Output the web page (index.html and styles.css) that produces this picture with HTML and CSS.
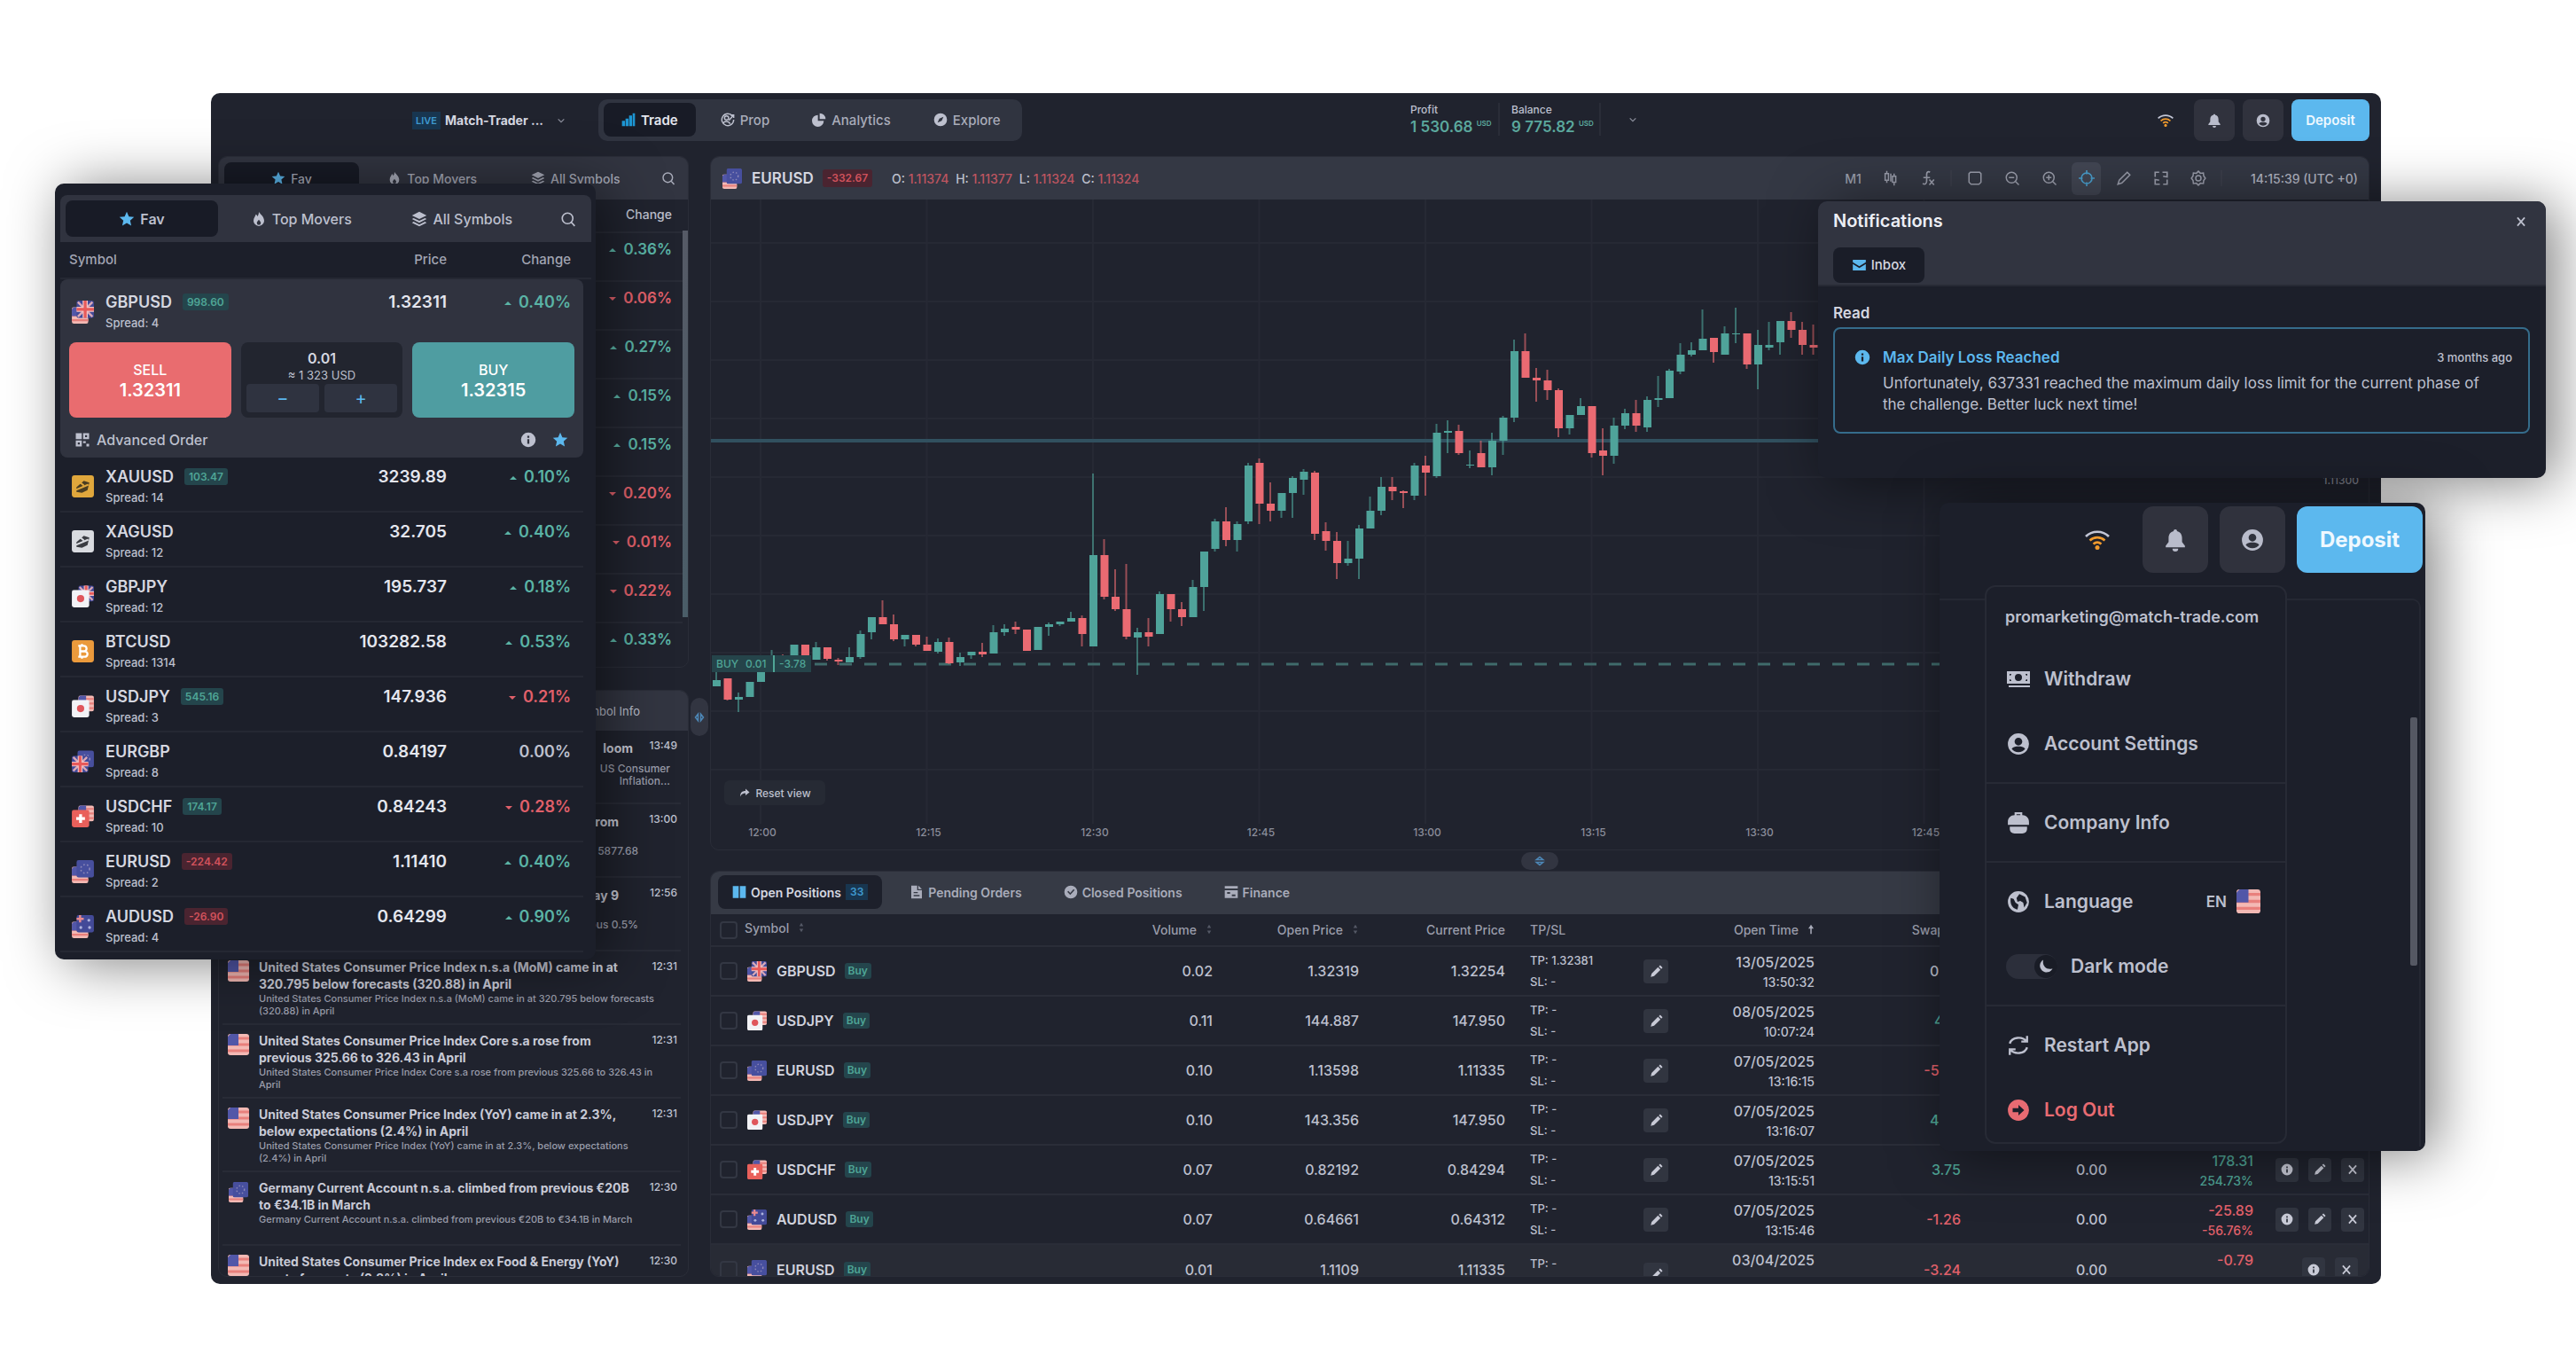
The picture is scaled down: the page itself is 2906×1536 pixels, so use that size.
FILE: index.html
```html
<!DOCTYPE html>
<html lang="en">
<head>
  <meta charset="UTF-8" />
  <title>Match-Trader</title>
  <meta name="viewport" content="width=device-width, initial-scale=1" />
  <link rel="stylesheet" href="styles.css">
</head>
<body>

<!-- icon sprite -->
<svg class="sprite" aria-hidden="true">
  <symbol id="i-star" viewBox="0 0 24 24"><path fill="currentColor" d="M12 1l3.2 7.2 7.8.8-5.9 5.2 1.700 7.800L12 18l-6.800 4 1.700-7.800L1 9l7.800-.8z"/></symbol>
  <symbol id="i-flame" viewBox="0 0 24 24"><path fill="currentColor" fill-rule="evenodd" d="M12 1c1 3 8 7 8 13.500a8 8 0 0 1-16 0C4 10 7 8 7.500 5c1.500.5 2 2 2.500 3 1.500-2 2-4.500 2-7zm0 12c-1.500 2-3 3-3 5a3 3 0 0 0 6 0c0-2-1.500-3-3-5z"/></symbol>
  <symbol id="i-layers" viewBox="0 0 24 24"><path fill="currentColor" d="M12 1l11 5.500-11 5.500L1 6.500zM3.500 10.500L12 14.700l8.500-4.200L23 12l-11 5.500L1 12zM3.500 16L12 20.200 20.500 16 23 17.500 12 23 1 17.500z"/></symbol>
  <symbol id="i-search" viewBox="0 0 24 24"><path fill="none" stroke="currentColor" stroke-width="2.200" d="M11 3a8 8 0 1 0 0 16 8 8 0 0 0 0-16zM16.800 17l5 5.500"/></symbol>
  <symbol id="i-bars" viewBox="0 0 24 24"><path fill="currentColor" d="M1 14h5v9H1zM7 10h5v13H7zM13 5h5v18h-5zM19 1h4v22h-4z"/></symbol>
  <symbol id="i-prop" viewBox="0 0 24 24"><g fill="none" stroke="currentColor" stroke-width="2.200"><path d="M20 6a10 10 0 1 0 2 6M4 19c1-5 9-6 12 0"/><circle cx="10" cy="9" r="3.500"/><path d="M14 13l8-9M17 4h5v5"/></g></symbol>
  <symbol id="i-pie" viewBox="0 0 24 24"><path fill="currentColor" d="M10 4v10h10a10 10 0 1 1-10-10zM13 1a10 10 0 0 1 10 10H13z"/></symbol>
  <symbol id="i-compass" viewBox="0 0 24 24"><path fill="currentColor" fill-rule="evenodd" d="M12 1a11 11 0 1 0 0 22 11 11 0 0 0 0-22zm5 6l-3 7-7 3 3-7z"/></symbol>
  <symbol id="i-chev" viewBox="0 0 24 24"><path fill="none" stroke="currentColor" stroke-width="3" d="M4 8l8 8 8-8"/></symbol>
  <symbol id="i-wifi" viewBox="0 0 28 24"><g fill="none" stroke-width="2.600"><path stroke="#c3c6d6" d="M1 8c7-7 19-7 26 0"/><path stroke="#f09a2d" d="M5.500 12.500c5-4.500 12-4.500 17 0M9.500 16.500c3-2.500 6-2.500 9 0"/></g><circle cx="14" cy="20.500" r="2.500" fill="#f09a2d"/></symbol>
  <symbol id="i-bell" viewBox="0 0 24 24"><path fill="currentColor" d="M12 1c-1.200 0-1.800.8-1.800 1.800C7 3.600 5 6 5 10v4l-3 4v1.500h20V18l-3-4v-4c0-4-2-6.400-5.200-7.200C13.800 1.800 13.200 1 12 1zM9 21h6a3 3 0 0 1-6 0z"/></symbol>
  <symbol id="i-user" viewBox="0 0 24 24"><path fill="currentColor" fill-rule="evenodd" d="M12 1a11 11 0 1 0 0 22 11 11 0 0 0 0-22zm0 4.500a4 4 0 1 1 0 8 4 4 0 0 1 0-8zm0 15c-3 0-5.500-1.500-7-3.500 1.500-2 4.500-2.500 7-2.500s5.500.5 7 2.500c-1.500 2-4 3.500-7 3.500z"/></symbol>
  <symbol id="i-candles" viewBox="0 0 24 24"><path fill="none" stroke="currentColor" stroke-width="2" d="M6 1v4M6 15v4M3.500 5h5v10h-5zM12 5v12M17 5v4M17 18v5M14.500 9h5v9h-5z"/></symbol>
  <symbol id="i-fx" viewBox="0 0 24 24"><path fill="none" stroke="currentColor" stroke-width="2.200" d="M15 3c-3-2-5 0-5 3v10c0 4-2 6-6 4M5 11h10M14 14l7 8M21 14l-7 8"/></symbol>
  <symbol id="i-frame" viewBox="0 0 24 24"><path fill="none" stroke="currentColor" stroke-width="2" d="M5 3h14l2 2v13l-3 3H6l-3-3V5z"/></symbol>
  <symbol id="i-zout" viewBox="0 0 24 24"><path fill="none" stroke="currentColor" stroke-width="2" d="M11 3a8 8 0 1 0 0 16 8 8 0 0 0 0-16zM17 17l5 5M7 11h8"/></symbol>
  <symbol id="i-zin" viewBox="0 0 24 24"><path fill="none" stroke="currentColor" stroke-width="2" d="M11 3a8 8 0 1 0 0 16 8 8 0 0 0 0-16zM17 17l5 5M7 11h8M11 7v8"/></symbol>
  <symbol id="i-cross" viewBox="0 0 24 24"><path fill="none" stroke="currentColor" stroke-width="2.200" d="M12 4a8 8 0 1 0 0 16 8 8 0 0 0 0-16zM12 0v6M12 18v6M0 12h6M18 12h6"/></symbol>
  <symbol id="i-pencil" viewBox="0 0 24 24"><path fill="currentColor" d="M2 22l1.500-6L15 4.500 19.500 9 8 20.500zM16.500 3L19 .8 23.200 5 21 7.500z"/></symbol>
  <symbol id="i-line" viewBox="0 0 24 24"><path fill="none" stroke="currentColor" stroke-width="2" d="M3 21l2-6L17 3l4 4L9 19z"/></symbol>
  <symbol id="i-expand" viewBox="0 0 24 24"><path fill="none" stroke="currentColor" stroke-width="2.200" d="M3 10V3h6M21 14v7h-6M14 3h7v7l-6-1M10 21H3v-7l6 1"/></symbol>
  <symbol id="i-gear" viewBox="0 0 24 24"><g fill="none" stroke="currentColor" stroke-width="2"><path d="M12 1.500l3 3 4.500-.5.5 4.500 2.500 3.500-2.500 3.500-.5 4.500-4.500-.5-3 3-3-3-4.500.5-.5-4.500L1.500 12 4 8.500 4.500 4l4.500.5z"/><circle cx="12" cy="12" r="4"/></g></symbol>
  <symbol id="i-info" viewBox="0 0 24 24"><path fill="currentColor" fill-rule="evenodd" d="M12 1a11 11 0 1 0 0 22 11 11 0 0 0 0-22zm-1.500 5h3v3h-3zm0 5h3v7h-3z"/></symbol>
  <symbol id="i-close" viewBox="0 0 24 24"><path fill="none" stroke="currentColor" stroke-width="3" d="M5 4l14 16M19 4L5 20"/></symbol>
  <symbol id="i-inbox" viewBox="0 0 24 24"><path fill="currentColor" d="M1 3h22v4l-11 7L1 7zM1 10l11 7 11-7v11H1z"/></symbol>
  <symbol id="i-grid" viewBox="0 0 24 24"><path fill="currentColor" fill-rule="evenodd" d="M2 2h9v9H2zM13 2h9v9h-9zm3 3v3h3V5zM2 13h9v9H2zm3 3v3h3v-3zM13 14h4v3h-4zM18 18h4v4h-4z"/></symbol>
  <symbol id="i-book" viewBox="0 0 24 24"><path fill="currentColor" d="M1 2h10v20H1zM13 2h10v20H13z"/></symbol>
  <symbol id="i-file" viewBox="0 0 24 24"><path fill="currentColor" fill-rule="evenodd" d="M3 1h10v8h8v14H3zm12 0l6 6h-6zM7 12v2h7v-2zm0 5v2h10v-2z"/></symbol>
  <symbol id="i-closed" viewBox="0 0 24 24"><path fill="currentColor" fill-rule="evenodd" d="M12 1a11 11 0 1 0 0 22 11 11 0 0 0 0-22zM6 11.500L8 10l3 3.500L16.500 7l2 1.800L11 17z"/></symbol>
  <symbol id="i-finance" viewBox="0 0 24 24"><path fill="currentColor" fill-rule="evenodd" d="M1 2h22v4H1zM1 9h22v13H1zm4 3v3h5v-3zm8 4v3h6v-3z"/></symbol>
  <symbol id="i-reset" viewBox="0 0 24 24"><path fill="currentColor" d="M2 21c0-9 4-13 12-13V3l9 8-9 7v-5c-6 0-9 2-12 8z"/></symbol>
  <symbol id="i-cash" viewBox="0 0 28 24"><path fill="currentColor" fill-rule="evenodd" d="M1 3h26v14H1zm3 3v2a2 2 0 0 0 2-2zm20 0h-2a2 2 0 0 0 2 2zM4 14h2a2 2 0 0 0-2-2zm20 0v-2a2 2 0 0 0-2 2zM14 6a4 4 0 1 0 0 8 4 4 0 0 0 0-8zM3 19h24v2H3z"/></symbol>
  <symbol id="i-case" viewBox="0 0 24 24"><path fill="currentColor" fill-rule="evenodd" d="M8 4V1h8v3c4 0 7 3 7 7v3H1v-3c0-4 3-7 7-7zm2 0h4V3h-4zM3 16h18v2c0 3-2 5-5 5H8c-3 0-5-2-5-5z"/></symbol>
  <symbol id="i-globe" viewBox="0 0 24 24"><path fill="currentColor" fill-rule="evenodd" d="M12 1a11 11 0 1 0 0 22 11 11 0 0 0 0-22zM4 8l3 1 2 4 3 2-1 5c-5-1-8-5-7-12zm9-4l6 3 2 6-3 5-1-5-3-2-3 1-1-4z"/></symbol>
  <symbol id="i-moon" viewBox="0 0 24 24"><path fill="currentColor" d="M8 2a10 10 0 1 0 14 13C13 18 6 11 8 2z"/></symbol>
  <symbol id="i-refresh" viewBox="0 0 24 24"><path fill="none" stroke="currentColor" stroke-width="2.200" d="M3 10c2-7 13-8 18-2M21 2v6h-6M21 14c-2 7-13 8-18 2M3 22v-6h6"/></symbol>
  <symbol id="i-logout" viewBox="0 0 24 24"><path fill="currentColor" fill-rule="evenodd" d="M12 1a11 11 0 1 0 0 22 11 11 0 0 0 0-22zm0 5.500l6 5.500-6 5.500V14H6v-4h6z"/></symbol>
  <symbol id="i-sort" viewBox="0 0 8 16"><path fill="currentColor" d="M4 1l3 5H1zM4 15l-3-5h6z"/></symbol>
  <symbol id="i-sort-up" viewBox="0 0 8 16"><path fill="currentColor" d="M4 1l4 6H5v8H3V7H0z"/></symbol>
  <symbol id="i-split" viewBox="0 0 16 16"><path fill="none" stroke="currentColor" stroke-width="2" d="M6 3L2 8l4 5zM10 3l4 5-4 5z"/></symbol>

  <symbol id="f-us" viewBox="0 0 24 24"><rect width="24" height="24" rx="3" fill="#f3b9b4"/><path stroke="#e8807c" stroke-width="3" d="M0 5h24M0 12h24M0 19h24"/><path fill="#5257a8" d="M3 0h9v13H0V3z"/></symbol>
  <symbol id="f-eu" viewBox="0 0 24 24"><rect width="24" height="24" rx="3" fill="#474f9e"/><circle cx="12" cy="12" r="6" fill="none" stroke="#8b87b8" stroke-width="2" stroke-dasharray="2 3"/></symbol>
  <symbol id="f-gb" viewBox="0 0 24 24"><rect width="24" height="24" rx="3" fill="#434a98"/><path stroke="#d9a9b8" stroke-width="3" d="M2 2l20 20M22 2L2 22"/><path stroke="#f0c4c6" stroke-width="7" d="M12 0v24M0 12h24"/><path stroke="#e75a5a" stroke-width="4" d="M12 0v24M0 12h24"/></symbol>
  <symbol id="f-jp" viewBox="0 0 24 24"><rect width="24" height="24" rx="3" fill="#f2f2f6"/><circle cx="12" cy="12" r="5" fill="#e0565c"/></symbol>
  <symbol id="f-ch" viewBox="0 0 24 24"><rect width="24" height="24" rx="3" fill="#e9605b"/><path fill="#fff" d="M10 6h4v4h4v4h-4v4h-4v-4H6v-4h4z"/></symbol>
  <symbol id="f-au" viewBox="0 0 24 24"><rect width="24" height="24" rx="3" fill="#434a98"/><path stroke="#e98a90" stroke-width="3" d="M5 0v10M0 5h10"/><g fill="#aeb3dd"><circle cx="6" cy="17" r="2"/><circle cx="17" cy="7" r="2"/><circle cx="18" cy="17" r="2"/></g></symbol>
  <symbol id="p-gbpusd" viewBox="0 0 26 26"><use href="#f-us" x="1" y="8" width="18" height="18"/><use href="#f-gb" x="6" y="1" width="19" height="19"/></symbol>
  <symbol id="p-eurusd" viewBox="0 0 26 26"><use href="#f-us" x="1" y="8" width="18" height="18"/><use href="#f-eu" x="6" y="1" width="19" height="19"/></symbol>
  <symbol id="p-audusd" viewBox="0 0 26 26"><use href="#f-us" x="1" y="8" width="18" height="18"/><use href="#f-au" x="6" y="1" width="19" height="19"/></symbol>
  <symbol id="p-usdjpy" viewBox="0 0 26 26"><use href="#f-us" x="8" y="1" width="17" height="18"/><use href="#f-jp" x="1" y="6" width="19" height="19"/></symbol>
  <symbol id="p-gbpjpy" viewBox="0 0 26 26"><use href="#f-gb" x="8" y="1" width="17" height="18"/><use href="#f-jp" x="1" y="6" width="19" height="19"/></symbol>
  <symbol id="p-usdchf" viewBox="0 0 26 26"><use href="#f-us" x="8" y="1" width="17" height="18"/><use href="#f-ch" x="1" y="6" width="19" height="19"/></symbol>
  <symbol id="p-eurgbp" viewBox="0 0 26 26"><use href="#f-eu" x="7" y="1" width="18" height="19"/><use href="#f-gb" x="1" y="7" width="18" height="18"/></symbol>
  <symbol id="p-xauusd" viewBox="0 0 26 26"><rect x="1" y="1" width="24" height="24" rx="3" fill="#e0a73c"/><path fill="#4a3d22" d="M6 14l8-7 6 2-2 8-6 3-6-1z"/><path stroke="#e0a73c" stroke-width="2" d="M5 17l14-6M9 8l5 4"/></symbol>
  <symbol id="p-xagusd" viewBox="0 0 26 26"><rect x="1" y="1" width="24" height="24" rx="3" fill="#d9dbe0"/><path fill="#3a3c42" d="M6 14l8-7 6 2-2 8-6 3-6-1z"/><path stroke="#d9dbe0" stroke-width="2" d="M5 17l14-6M9 8l5 4"/></symbol>
  <symbol id="p-btcusd" viewBox="0 0 26 26"><rect x="1" y="1" width="24" height="24" rx="3" fill="#eb9a3c"/><path fill="none" stroke="#fff" stroke-width="2.200" d="M8 7h6a3 3 0 0 1 0 6H10h5a3 3 0 0 1 0 6H8M10 7v12M12 5v2M12 19v2"/></symbol>
</svg>

<main class="stage">

  <!-- main trading window -->
  <section class="terminal">
    <header class="topbar">
      <button class="account"><span class="live">LIVE</span><b>Match-Trader ...</b><svg class="ico-s"><use href="#i-chev"/></svg></button>
      <nav class="mainnav">
        <button class="on"><svg><use href="#i-bars"/></svg>Trade</button>
        <button><svg><use href="#i-prop"/></svg>Prop</button>
        <button><svg><use href="#i-pie"/></svg>Analytics</button>
        <button><svg><use href="#i-compass"/></svg>Explore</button>
      </nav>
      <div class="totals">
        <div class="total"><span>Profit</span><strong>1 530.68 <sup>USD</sup></strong></div>
        <div class="total"><span>Balance</span><strong>9 775.82 <sup>USD</sup></strong></div>
        <button class="more" aria-label="More totals"><svg class="ico-s"><use href="#i-chev"/></svg></button>
      </div>
      <div class="tools">
        <svg class="wifi"><use href="#i-wifi"/></svg>
        <button class="sq" aria-label="Notifications"><svg><use href="#i-bell"/></svg></button>
        <button class="sq" aria-label="Account"><svg><use href="#i-user"/></svg></button>
        <button class="deposit">Deposit</button>
      </div>
    </header>

    <div class="workspace">
      <div class="side">
        <section class="panel symbols">
          <div class="tabs">
            <button class="on"><svg class="blue"><use href="#i-star"/></svg>Fav</button>
            <button><svg><use href="#i-flame"/></svg>Top Movers</button>
            <button><svg><use href="#i-layers"/></svg>All Symbols</button>
            <button class="find" aria-label="Search"><svg><use href="#i-search"/></svg></button>
          </div>
          <div class="changes">
            <h4>Change</h4>
            <ul>
              <li class="up">0.36%</li>
              <li class="down">0.06%</li>
              <li class="up">0.27%</li>
              <li class="up">0.15%</li>
              <li class="up">0.15%</li>
              <li class="down">0.20%</li>
              <li class="down">0.01%</li>
              <li class="down">0.22%</li>
              <li class="up">0.33%</li>
            </ul>
          </div>
        </section>

        <section class="panel news">
          <div class="news-head"><button>Symbol Info</button></div>
          <article class="tail">
            <h5>loom</h5><time>13:49</time>
            <p>US Consumer<br>Inflation...</p>
          </article>
          <article class="tail short">
            <h5>from</h5><time>13:00</time>
            <p>5877.68</p>
          </article>
          <article class="tail short">
            <h5>May 9</h5><time>12:56</time>
            <p>previous 0.5%</p>
          </article>
          <article>
            <svg><use href="#f-us"/></svg>
            <h5>United States Consumer Price Index n.s.a (MoM) came in at<br>320.795 below forecasts (320.88) in April</h5><time>12:31</time>
            <p>United States Consumer Price Index n.s.a (MoM) came in at 320.795 below forecasts<br>(320.88) in April</p>
          </article>
          <article>
            <svg><use href="#f-us"/></svg>
            <h5>United States Consumer Price Index Core s.a rose from<br>previous 325.66 to 326.43 in April</h5><time>12:31</time>
            <p>United States Consumer Price Index Core s.a rose from previous 325.66 to 326.43 in<br>April</p>
          </article>
          <article>
            <svg><use href="#f-us"/></svg>
            <h5>United States Consumer Price Index (YoY) came in at 2.3%,<br>below expectations (2.4%) in April</h5><time>12:31</time>
            <p>United States Consumer Price Index (YoY) came in at 2.3%, below expectations<br>(2.4%) in April</p>
          </article>
          <article>
            <svg><use href="#p-eurusd"/></svg>
            <h5>Germany Current Account n.s.a. climbed from previous €20B<br>to €34.1B in March</h5><time>12:30</time>
            <p>Germany Current Account n.s.a. climbed from previous €20B to €34.1B in March</p>
          </article>
          <article>
            <svg><use href="#f-us"/></svg>
            <h5>United States Consumer Price Index ex Food &amp; Energy (YoY)<br>meets forecasts (2.8%) in April</h5><time>12:30</time>
          </article>
        </section>
        <button class="handle side-handle" aria-label="Resize side panel"><svg><use href="#i-split"/></svg></button>
      </div>

      <div class="center">
        <section class="panel chart">
          <div class="chart-head">
            <svg class="pair"><use href="#p-eurusd"/></svg>
            <h2>EURUSD</h2>
            <span class="tag red">-332.67</span>
            <p class="ohlc">O: <i>1.11374</i> H: <i>1.11377</i> L: <i>1.11324</i> C: <i>1.11324</i></p>
            <div class="chart-tools">
              <button>M1</button>
              <button aria-label="Chart type"><svg><use href="#i-candles"/></svg></button>
              <button aria-label="Indicators"><svg><use href="#i-fx"/></svg></button>
              <span class="sep"></span>
              <button aria-label="Layout"><svg><use href="#i-frame"/></svg></button>
              <button aria-label="Zoom out"><svg><use href="#i-zout"/></svg></button>
              <button aria-label="Zoom in"><svg><use href="#i-zin"/></svg></button>
              <button class="on" aria-label="Crosshair"><svg><use href="#i-cross"/></svg></button>
              <button aria-label="Draw"><svg><use href="#i-line"/></svg></button>
              <button aria-label="Full screen"><svg><use href="#i-expand"/></svg></button>
              <button aria-label="Settings"><svg><use href="#i-gear"/></svg></button>
              <span class="sep"></span>
              <time>14:15:39 (UTC +0)</time>
            </div>
          </div>
          <div class="plot">
            <svg id="candles" class="candles" role="img" aria-label="EURUSD one minute candles"></svg>
            <button class="reset"><svg><use href="#i-reset"/></svg>Reset view</button>
          </div>
        </section>
        <button class="handle row-handle" aria-label="Resize chart"><svg><use href="#i-split"/></svg></button>

        <section class="panel positions">
          <div class="pos-tabs">
            <button class="on"><svg class="blue"><use href="#i-book"/></svg>Open Positions <span class="count">33</span></button>
            <button><svg><use href="#i-file"/></svg>Pending Orders</button>
            <button><svg><use href="#i-closed"/></svg>Closed Positions</button>
            <button><svg><use href="#i-finance"/></svg>Finance</button>
          </div>
          <table>
            <colgroup><col><col class="c"><col class="c"><col class="c"><col class="c-tp"><col class="c"><col class="c"><col class="c"><col class="c"><col class="c-act"></colgroup>
            <thead>
              <tr>
                <th class="sym"><input type="checkbox" aria-label="Select all">Symbol<svg><use href="#i-sort"/></svg></th>
                <th>Volume<svg><use href="#i-sort"/></svg></th>
                <th>Open Price<svg><use href="#i-sort"/></svg></th>
                <th>Current Price</th>
                <th class="tp">TP/SL</th>
                <th>Open Time<svg class="lit"><use href="#i-sort-up"/></svg></th>
                <th>Swap<svg><use href="#i-sort"/></svg></th><th>Commission</th><th>Profit</th><th></th>
              </tr>
            </thead>
            <tbody>
              <tr>
                <td class="sym"><input type="checkbox" aria-label="Select GBPUSD"><svg><use href="#p-gbpusd"/></svg><b>GBPUSD</b><span class="tag">Buy</span></td>
                <td>0.02</td><td>1.32319</td><td>1.32254</td>
                <td class="tp"><span>TP: 1.32381<br>SL: -</span><button aria-label="Edit TP/SL"><svg><use href="#i-pencil"/></svg></button></td>
                <td class="when">13/05/2025<small>13:50:32</small></td>
                <td>0.00</td><td></td><td></td><td></td>
              </tr>
              <tr>
                <td class="sym"><input type="checkbox" aria-label="Select USDJPY"><svg><use href="#p-usdjpy"/></svg><b>USDJPY</b><span class="tag">Buy</span></td>
                <td>0.11</td><td>144.887</td><td>147.950</td>
                <td class="tp"><span>TP: -<br>SL: -</span><button aria-label="Edit TP/SL"><svg><use href="#i-pencil"/></svg></button></td>
                <td class="when">08/05/2025<small>10:07:24</small></td>
                <td class="gain">4.19</td><td></td><td></td><td></td>
              </tr>
              <tr>
                <td class="sym"><input type="checkbox" aria-label="Select EURUSD"><svg><use href="#p-eurusd"/></svg><b>EURUSD</b><span class="tag">Buy</span></td>
                <td>0.10</td><td>1.13598</td><td>1.11335</td>
                <td class="tp"><span>TP: -<br>SL: -</span><button aria-label="Edit TP/SL"><svg><use href="#i-pencil"/></svg></button></td>
                <td class="when">07/05/2025<small>13:16:15</small></td>
                <td class="loss">-5.08</td><td></td><td></td><td></td>
              </tr>
              <tr>
                <td class="sym"><input type="checkbox" aria-label="Select USDJPY"><svg><use href="#p-usdjpy"/></svg><b>USDJPY</b><span class="tag">Buy</span></td>
                <td>0.10</td><td>143.356</td><td>147.950</td>
                <td class="tp"><span>TP: -<br>SL: -</span><button aria-label="Edit TP/SL"><svg><use href="#i-pencil"/></svg></button></td>
                <td class="when">07/05/2025<small>13:16:07</small></td>
                <td class="gain">4.20</td><td></td><td></td><td></td>
              </tr>
              <tr>
                <td class="sym"><input type="checkbox" aria-label="Select USDCHF"><svg><use href="#p-usdchf"/></svg><b>USDCHF</b><span class="tag">Buy</span></td>
                <td>0.07</td><td>0.82192</td><td>0.84294</td>
                <td class="tp"><span>TP: -<br>SL: -</span><button aria-label="Edit TP/SL"><svg><use href="#i-pencil"/></svg></button></td>
                <td class="when">07/05/2025<small>13:15:51</small></td>
                <td class="gain">3.75</td><td>0.00</td>
                <td class="when gain">178.31<small>254.73%</small></td>
                <td class="act"><button aria-label="Info"><svg><use href="#i-info"/></svg></button><button aria-label="Edit"><svg><use href="#i-pencil"/></svg></button><button aria-label="Close"><svg><use href="#i-close"/></svg></button></td>
              </tr>
              <tr>
                <td class="sym"><input type="checkbox" aria-label="Select AUDUSD"><svg><use href="#p-audusd"/></svg><b>AUDUSD</b><span class="tag">Buy</span></td>
                <td>0.07</td><td>0.64661</td><td>0.64312</td>
                <td class="tp"><span>TP: -<br>SL: -</span><button aria-label="Edit TP/SL"><svg><use href="#i-pencil"/></svg></button></td>
                <td class="when">07/05/2025<small>13:15:46</small></td>
                <td class="loss">-1.26</td><td>0.00</td>
                <td class="when loss">-25.89<small>-56.76%</small></td>
                <td class="act"><button aria-label="Info"><svg><use href="#i-info"/></svg></button><button aria-label="Edit"><svg><use href="#i-pencil"/></svg></button><button aria-label="Close"><svg><use href="#i-close"/></svg></button></td>
              </tr>
              <tr class="hover">
                <td class="sym"><input type="checkbox" aria-label="Select EURUSD"><svg><use href="#p-eurusd"/></svg><b>EURUSD</b><span class="tag">Buy</span></td>
                <td>0.01</td><td>1.1109</td><td>1.11335</td>
                <td class="tp"><span>TP: -</span><button aria-label="Edit TP/SL"><svg><use href="#i-pencil"/></svg></button></td>
                <td class="when">03/04/2025<small>&nbsp;</small></td>
                <td class="loss">-3.24</td><td>0.00</td>
                <td class="when loss">-0.79<small>&nbsp;</small></td>
                <td class="act"><button aria-label="Info"><svg><use href="#i-info"/></svg></button><button aria-label="Close"><svg><use href="#i-close"/></svg></button></td>
              </tr>
            </tbody>
          </table>
        </section>
      </div>
    </div>
  </section>

  <!-- market watch popup -->
  <section class="popup watch">
    <div class="tabs">
      <button class="on"><svg class="blue"><use href="#i-star"/></svg>Fav</button>
      <button><svg><use href="#i-flame"/></svg>Top Movers</button>
      <button><svg><use href="#i-layers"/></svg>All Symbols</button>
      <button class="find" aria-label="Search"><svg><use href="#i-search"/></svg></button>
    </div>
    <div class="cols"><span>Symbol</span><span>Price</span><span>Change</span></div>
    <div class="selected">
      <div class="quote">
        <svg><use href="#p-gbpusd"/></svg>
        <div class="name"><b>GBPUSD</b><span class="tag">998.60</span><small>Spread: 4</small></div>
        <span class="price">1.32311</span><span class="chg up">0.40%</span>
      </div>
      <div class="trade">
        <button class="sell"><span>SELL</span>1.32311</button>
        <div class="lots">
          <input type="text" value="0.01" aria-label="Volume">
          <small>≈ 1 323 USD</small>
          <button aria-label="Less volume">−</button><button aria-label="More volume">+</button>
        </div>
        <button class="buy"><span>BUY</span>1.32315</button>
      </div>
      <div class="advanced">
        <button><svg><use href="#i-grid"/></svg>Advanced Order</button>
        <button aria-label="Symbol info"><svg><use href="#i-info"/></svg></button>
        <button class="blue" aria-label="Favourite"><svg><use href="#i-star"/></svg></button>
      </div>
    </div>
    <div class="quote"><svg><use href="#p-xauusd"/></svg><div class="name"><b>XAUUSD</b><span class="tag">103.47</span><small>Spread: 14</small></div><span class="price">3239.89</span><span class="chg up">0.10%</span></div>
    <div class="quote"><svg><use href="#p-xagusd"/></svg><div class="name"><b>XAGUSD</b><small>Spread: 12</small></div><span class="price">32.705</span><span class="chg up">0.40%</span></div>
    <div class="quote"><svg><use href="#p-gbpjpy"/></svg><div class="name"><b>GBPJPY</b><small>Spread: 12</small></div><span class="price">195.737</span><span class="chg up">0.18%</span></div>
    <div class="quote"><svg><use href="#p-btcusd"/></svg><div class="name"><b>BTCUSD</b><small>Spread: 1314</small></div><span class="price">103282.58</span><span class="chg up">0.53%</span></div>
    <div class="quote"><svg><use href="#p-usdjpy"/></svg><div class="name"><b>USDJPY</b><span class="tag">545.16</span><small>Spread: 3</small></div><span class="price">147.936</span><span class="chg down">0.21%</span></div>
    <div class="quote"><svg><use href="#p-eurgbp"/></svg><div class="name"><b>EURGBP</b><small>Spread: 8</small></div><span class="price">0.84197</span><span class="chg">0.00%</span></div>
    <div class="quote"><svg><use href="#p-usdchf"/></svg><div class="name"><b>USDCHF</b><span class="tag">174.17</span><small>Spread: 10</small></div><span class="price">0.84243</span><span class="chg down">0.28%</span></div>
    <div class="quote"><svg><use href="#p-eurusd"/></svg><div class="name"><b>EURUSD</b><span class="tag red">-224.42</span><small>Spread: 2</small></div><span class="price">1.11410</span><span class="chg up">0.40%</span></div>
    <div class="quote"><svg><use href="#p-audusd"/></svg><div class="name"><b>AUDUSD</b><span class="tag red">-26.90</span><small>Spread: 4</small></div><span class="price">0.64299</span><span class="chg up">0.90%</span></div>
  </section>

  <!-- notifications popup -->
  <section class="popup notes">
    <header>
      <h3>Notifications</h3>
      <button class="x" aria-label="Close"><svg><use href="#i-close"/></svg></button>
      <button class="inbox"><svg class="blue"><use href="#i-inbox"/></svg>Inbox</button>
    </header>
    <h4>Read</h4>
    <article>
      <svg class="blue"><use href="#i-info"/></svg>
      <h5>Max Daily Loss Reached</h5>
      <time>3 months ago</time>
      <p>Unfortunately, 637331 reached the maximum daily loss limit for the current phase of the challenge. Better luck next time!</p>
    </article>
  </section>

  <!-- account menu popup -->
  <section class="popup profile">
    <header>
      <svg class="wifi"><use href="#i-wifi"/></svg>
      <button class="sq" aria-label="Notifications"><svg><use href="#i-bell"/></svg></button>
      <button class="sq" aria-label="Account"><svg><use href="#i-user"/></svg></button>
      <button class="deposit">Deposit</button>
    </header>
    <div class="sheet">
      <div class="menu">
        <div class="group">
          <p>promarketing@match-trade.com</p>
          <button><svg><use href="#i-cash"/></svg>Withdraw</button>
          <button><svg><use href="#i-user"/></svg>Account Settings</button>
        </div>
        <div class="group"><button><svg><use href="#i-case"/></svg>Company Info</button></div>
        <div class="group">
          <button><svg><use href="#i-globe"/></svg>Language<span>EN</span><svg class="flag"><use href="#f-us"/></svg></button>
          <label class="switch"><input type="checkbox" checked><svg><use href="#i-moon"/></svg>Dark mode</label>
        </div>
        <div class="group">
          <button><svg><use href="#i-refresh"/></svg>Restart App</button>
          <button class="out"><svg><use href="#i-logout"/></svg>Log Out</button>
        </div>
      </div>
      <div class="scroll"></div>
    </div>
  </section>

</main>
<script src="chart.js"></script>
</body>
</html>
```

FILE: styles.css
```css
* {
  box-sizing: border-box;
}

body {
  margin: 0;
  background: #fff;
  font-family: Inter, "Liberation Sans", sans-serif;
  font-size: 15px;
  color: #bdc0ce;
}

h2, h3, h4, h5, p, ul {
  margin: 0;
  padding: 0;
}

button {
  display: flex;
  align-items: center;
  justify-content: center;
  padding: 0;
  border: none;
  background: none;
  color: inherit;
  font: inherit;
  cursor: pointer;
  white-space: nowrap;
}

svg {
  flex: none;
}

.sprite {
  position: absolute;
  width: 0;
  height: 0;
}

.blue {
  color: #5cb8ee;
}

.tag {
  padding: 2px 5px;
  border-radius: 3px;
  background: #24454c;
  color: #4fa596;
  font-size: 12px;
  line-height: 16px;
  font-weight: 600;
}

.tag.red {
  background: #4a2430;
  color: #d2525c;
}

.stage {
  position: relative;
  padding: 105px 220px 88px 238px;
  overflow: hidden;
}

/* main window */

.terminal {
  background: #20232e;
  border-radius: 10px;
  overflow: hidden;
}

.topbar {
  display: grid;
  grid-template-columns: 429px 1fr 1fr 1fr;
  padding: 7px 13px 17px 8px;
  height: 71px;
}

.ico-s {
  width: 10px;
  height: 10px;
  color: #8a8d9a;
}

.account {
  justify-content: flex-end;
  gap: 5px;
  padding-right: 37px;
  color: #d5d7e0;
  font-size: 14px;
}

.account .ico-s {
  margin-left: 10px;
}

.live {
  padding: 2px 4px;
  background: #183650;
  color: #3f9ad0;
  font-size: 11px;
  line-height: 16px;
  font-weight: 600;
}

.mainnav {
  display: flex;
  gap: 8px;
  justify-self: start;
  padding: 4px 4px 5px 6px;
  background: #303440;
  border-radius: 10px;
}

.mainnav button {
  gap: 6px;
  padding: 0 20px;
  border-radius: 8px;
  color: #a9acba;
  font-size: 15px;
  font-weight: 500;
}

.mainnav svg {
  width: 16px;
  height: 16px;
  color: #bdc0ce;
}

.mainnav .on {
  background: #181b26;
  color: #e4e6ee;
  font-weight: 600;
}

.mainnav .on svg {
  color: #1d95d2;
}

.totals {
  display: flex;
  justify-self: end;
  padding: 4px 160px 6px 0;
}

.total {
  display: flex;
  flex-direction: column;
  justify-content: space-between;
  width: 101px;
  margin-right: 13px;
  border-right: 2px solid #2a2d38;
  font-size: 12px;
  line-height: 16px;
  font-weight: 500;
}

.total strong {
  color: #5ba89d;
  font-size: 17px;
  line-height: 20px;
  font-weight: 600;
  white-space: nowrap;
}

.total sup {
  font-size: 8px;
  line-height: 8px;
}

.more {
  margin-left: 18px;
}

.tools {
  display: flex;
  justify-content: flex-end;
  gap: 9px;
}

.tools .wifi {
  width: 18px;
  height: 16px;
  align-self: center;
  margin-right: 14px;
}

.sq {
  width: 46px;
  border-radius: 8px;
  background: #30323d;
}

.sq svg {
  width: 16px;
  height: 16px;
  color: #b9bccb;
}

.deposit {
  width: 88px;
  border-radius: 8px;
  background: #5cb8ee;
  color: #eef8ff;
  font-weight: 600;
}

.workspace {
  display: grid;
  grid-template-columns: 531px 1fr;
  gap: 24px;
  padding: 0 13px 8px 8px;
}

.panel {
  border: 1px solid #2a2d38;
  border-radius: 10px;
  overflow: hidden;
}

.side {
  position: relative;
  display: flex;
  flex-direction: column;
  gap: 25px;
}

.symbols {
  height: 577px;
}

.tabs {
  display: grid;
  grid-template-columns: 152px 1fr 1fr 44px;
  column-gap: 4px;
  height: 48px;
  padding: 6px 0 6px 6px;
  background: #323541;
  font-size: 14px;
  font-weight: 500;
  color: #a9acba;
}

.tabs button {
  gap: 6px;
  border-radius: 8px;
}

.tabs svg {
  width: 16px;
  height: 16px;
}

.tabs .on {
  background: #181b26;
}

.changes {
  border-style: solid;
  border-width: 0 6px 0 0;
  border-image: linear-gradient(to bottom, #20232e 36px, #565a66 36px, #4a5d68 470px, #20232e 470px) 1;
}

.changes h4 {
  height: 36px;
  padding-right: 12px;
  font-size: 14px;
  line-height: 34px;
  font-weight: 500;
  text-align: right;
}

.changes ul {
  list-style: none;
}

.changes li {
  height: 55px;
  padding-right: 12px;
  border-top: 2px solid #282b36;
  font-size: 17px;
  line-height: 36px;
  font-weight: 600;
  text-align: right;
}

.up {
  color: #5ab3a5;
}

.down {
  color: #e0606a;
}

.up::before,
.down::before {
  content: "";
  display: inline-block;
  margin-right: 8px;
  border: 4px solid transparent;
  vertical-align: 3px;
}

.up::before {
  border-bottom-color: #5ab3a5;
  border-top-width: 0;
}

.down::before {
  border-top-color: #e0606a;
  border-bottom-width: 0;
}

.news {
  flex: 1 1 0;
  height: 0;
}

.news-head {
  display: flex;
  justify-content: flex-end;
  height: 45px;
  padding-right: 54px;
  background: #323541;
  font-size: 13px;
}

.news article {
  display: grid;
  grid-template-columns: 35px 1fr 50px;
  grid-template-rows: auto 1fr;
  height: 83px;
  margin: 0 8px 0 4px;
  padding: 8px 4px 0 6px;
  border-bottom: 2px solid #282b36;
}

.news article > svg {
  width: 24px;
  height: 24px;
  margin-top: 2px;
}

.news h5 {
  color: #c8cad6;
  font-size: 14px;
  line-height: 19px;
  font-weight: 700;
  white-space: nowrap;
}

.news time {
  font-size: 12px;
  line-height: 18px;
  font-weight: 500;
  text-align: right;
}

.news p {
  grid-column: 2 / 4;
  color: #9a9dab;
  font-size: 11px;
  line-height: 14px;
  font-weight: 500;
  white-space: nowrap;
}

.news .tail h5 {
  grid-column: 2;
  line-height: 24px;
  text-align: right;
}

.news .tail p {
  padding: 4px 8px 0 0;
  font-size: 12px;
  text-align: right;
}

.news .short h5 {
  padding-right: 16px;
}

.news .short p {
  padding: 14px 44px 0 0;
}

.handle {
  border-radius: 12px;
  background: #323541;
  color: #4d88b8;
}

.handle svg {
  width: 12px;
  height: 12px;
}

.side-handle {
  position: absolute;
  top: 611px;
  right: -22px;
  width: 20px;
  height: 43px;
}

.row-handle {
  width: 42px;
  height: 20px;
  margin: 2px auto 1px;
}

.row-handle svg {
  transform: rotate(90deg);
}

/* chart */

.chart {
  height: 783px;
  display: flex;
  flex-direction: column;
}

.chart-head {
  display: flex;
  align-items: center;
  gap: 10px;
  height: 48px;
  padding: 0 12px;
  background: #343844;
}

.pair {
  width: 24px;
  height: 24px;
}

.chart-head h2 {
  color: #d5d7e0;
  font-size: 17px;
  font-weight: 600;
}

.ohlc {
  margin-left: 12px;
  font-size: 14px;
  font-weight: 500;
}

.ohlc i {
  margin-right: 4px;
  color: #bd5560;
  font-style: normal;
}

.chart-tools {
  display: flex;
  align-items: center;
  gap: 9px;
  margin-left: auto;
  font-size: 14px;
  font-weight: 500;
  color: #9a9dab;
}

.chart-tools button {
  width: 33px;
  height: 37px;
  border-radius: 6px;
}

.chart-tools svg {
  width: 18px;
  height: 18px;
}

.chart-tools .on {
  background: #424653;
  color: #4a9fce;
}

.sep {
  width: 2px;
  height: 18px;
  background: #3a3d49;
}

.chart-tools time {
  width: 144px;
  text-align: right;
  color: #b0b3c0;
}

.plot {
  position: relative;
  flex: 1;
}

.candles {
  display: block;
  width: 100%;
  height: 100%;
  font-size: 12px;
  font-weight: 500;
}

.grid-line {
  stroke: #262934;
  stroke-width: 2;
}

.candle-up {
  fill: #4fa39a;
}

.candle-down {
  fill: #ea6a72;
}

.wick {
  opacity: 0.6;
}

.last-price {
  stroke: #31505f;
  stroke-width: 4;
}

.order-line {
  stroke: #3f6b6b;
  stroke-width: 3;
  stroke-dasharray: 14 14;
}

.order-box {
  fill: #25444a;
}

.order-text {
  fill: #4fa596;
}

.axis-text {
  fill: #8a8d9a;
}

.reset {
  position: absolute;
  left: 15px;
  bottom: 50px;
  width: 114px;
  height: 28px;
  gap: 5px;
  border-radius: 6px;
  background: #262a34;
  font-size: 12px;
  font-weight: 500;
}

.reset svg {
  width: 14px;
  height: 12px;
}

/* positions */

.positions {
  height: 458px;
}

.pos-tabs {
  display: flex;
  gap: 15px;
  height: 48px;
  padding: 4px 8px 6px;
  background: #363a45;
  font-size: 14px;
  font-weight: 600;
  color: #a9acba;
}

.pos-tabs button {
  gap: 5px;
  padding: 0 16px;
  border-radius: 8px;
}

.pos-tabs svg {
  width: 16px;
  height: 16px;
}

.pos-tabs .on {
  background: #1d202b;
  color: #d5d7e0;
}

.count {
  padding: 0 5px;
  background: #183650;
  color: #3f9ad0;
  font-size: 12px;
  line-height: 18px;
}

table {
  width: 100%;
  table-layout: fixed;
  border-collapse: collapse;
}

.c {
  width: 165px;
}

.c-tp {
  width: 184px;
}

.c-act {
  width: 116px;
}

th {
  height: 36px;
  padding: 0 14px;
  color: #9a9dab;
  font-size: 14px;
  font-weight: 500;
  text-align: right;
}

th svg {
  width: 8px;
  height: 12px;
  margin-left: 10px;
  color: #555966;
}

th .lit {
  color: #a9acba;
}

td {
  height: 56px;
  padding: 0 14px;
  border-top: 2px solid #2a2d38;
  font-size: 16px;
  font-weight: 500;
  text-align: right;
}

.hover {
  background: #282b35;
}

th.sym,
td.sym {
  padding-left: 10px;
  text-align: left;
}

.sym input {
  appearance: none;
  width: 20px;
  height: 20px;
  margin: 0 8px 0 0;
  border: 2px solid #333743;
  border-radius: 4px;
  vertical-align: middle;
}

td.sym svg {
  width: 24px;
  height: 24px;
  margin: 0 10px 0 2px;
  vertical-align: middle;
}

.sym b {
  margin-right: 10px;
  color: #d0d2dd;
  font-weight: 600;
  vertical-align: middle;
}

.sym .tag {
  display: inline-block;
  padding: 1px 4px;
  vertical-align: middle;
}

.tp {
  text-align: left;
}

td.tp span {
  float: left;
  font-size: 13px;
  line-height: 24px;
}

.tp button {
  float: right;
  margin-top: 11px;
}

.tp button,
.act button {
  width: 28px;
  height: 27px;
  border-radius: 4px;
  background: #313540;
}

.tp svg,
.act svg {
  width: 15px;
  height: 15px;
  color: #c8cad6;
}

.when small {
  display: block;
  margin-top: 4px;
  font-size: 14px;
}

.gain {
  color: #4fa596;
}

.loss {
  color: #e0606a;
}

td.act {
  padding: 0 12px 0 0;
  white-space: nowrap;
}

.act button {
  display: inline-flex;
  width: 26px;
  margin-left: 11px;
  vertical-align: middle;
}

td.act svg {
  width: 14px;
  height: 14px;
}

/* floating windows */

.popup {
  position: absolute;
  background: #1c1f2a;
  border-radius: 10px;
  box-shadow: 12px 4px 64px rgba(0, 0, 0, 0.5);
}

.watch {
  top: 207px;
  left: 62px;
  width: 610px;
  padding: 13px 5px 8px 6px;
}

.watch .tabs {
  grid-template-columns: 172px 1fr 1fr 52px;
  column-gap: 6px;
  height: 53px;
  border-radius: 8px 8px 0 0;
  background: #30333f;
  font-size: 16px;
  color: #bdc0ce;
}

.watch .tabs .on {
  font-weight: 600;
}

.watch .tabs svg {
  width: 18px;
  height: 18px;
}

.cols {
  display: grid;
  grid-template-columns: 1fr 140px 140px;
  height: 42px;
  padding: 0 23px 0 10px;
  color: #a2a5b3;
  font-size: 15px;
  line-height: 40px;
  font-weight: 500;
  border-bottom: 2px solid #252833;
}

.cols span + span {
  text-align: right;
}

.selected {
  height: 201px;
  margin-right: 9px;
  border-radius: 8px;
  background: #30333f;
}

.quote {
  display: grid;
  grid-template-columns: 39px 1fr 140px 140px;
  height: 62px;
  padding: 9px 14px 0 12px;
  margin-right: 9px;
  border-bottom: 2px solid #252833;
  font-size: 19px;
  line-height: 26px;
}

.selected .quote {
  height: 71px;
  margin: 0;
  padding-top: 13px;
  border: none;
}

.quote svg {
  width: 27px;
  height: 27px;
  margin-top: 10px;
}

.name b {
  color: #d5d7e0;
  font-size: 18px;
  font-weight: 600;
}

.name .tag {
  margin-left: 12px;
  vertical-align: 2px;
}

.name small {
  display: block;
  font-size: 13px;
  line-height: 20px;
  font-weight: 500;
}

.price {
  color: #e4e6ee;
  font-weight: 600;
  text-align: right;
}

.chg {
  font-size: 18px;
  font-weight: 600;
  text-align: right;
}

.trade {
  display: grid;
  grid-template-columns: 1fr 1fr 1fr;
  gap: 11px;
  height: 85px;
  padding: 0 10px;
}

.sell,
.buy {
  flex-direction: column;
  border-radius: 8px;
  background: #e96c6f;
  color: #fff;
  font-size: 20px;
  line-height: 24px;
  font-weight: 600;
}

.buy {
  background: #4f9da1;
}

.sell span,
.buy span {
  font-size: 16px;
  line-height: 22px;
  font-weight: 500;
}

.lots {
  display: grid;
  grid-template-columns: 1fr 1fr;
  grid-template-rows: 22px 18px 32px;
  gap: 0 6px;
  align-content: center;
  padding: 4px 6px;
  border-radius: 8px;
  background: #22252f;
}

.lots input {
  grid-column: 1 / 3;
  width: 100%;
  padding: 0;
  border: none;
  background: none;
  color: #d5d7e0;
  font: inherit;
  font-size: 16px;
  font-weight: 600;
  text-align: center;
}

.lots small {
  grid-column: 1 / 3;
  font-size: 13px;
  text-align: center;
}

.lots button {
  border-radius: 4px;
  background: #2f3340;
  color: #5cb8ee;
  font-size: 20px;
}

.advanced {
  display: flex;
  align-items: center;
  gap: 18px;
  height: 45px;
  padding: 4px 17px 0 16px;
  font-size: 16px;
}

.advanced button:first-child {
  gap: 7px;
  margin-right: auto;
  font-weight: 500;
}

.advanced svg {
  width: 18px;
  height: 18px;
}

.notes {
  top: 227px;
  right: 34px;
  width: 821px;
  height: 312px;
}

.notes header {
  display: grid;
  grid-template-columns: 1fr auto;
  gap: 14px 0;
  height: 96px;
  padding: 9px 21px 0 17px;
  border-bottom: 2px solid #272a35;
  border-radius: 10px 10px 0 0;
  background: #313440;
}

.notes h3 {
  color: #eceef5;
  font-size: 20px;
  line-height: 26px;
  font-weight: 600;
}

.x svg {
  width: 14px;
  height: 14px;
}

.inbox {
  gap: 5px;
  width: 103px;
  height: 40px;
  border-radius: 8px;
  background: #1a1d28;
  color: #d5d7e0;
  font-weight: 500;
}

.inbox svg {
  width: 17px;
  height: 16px;
}

.notes h4 {
  padding: 18px 17px 4px;
  color: #d5d7e0;
  font-size: 17px;
  line-height: 24px;
  font-weight: 600;
}

.notes article {
  display: grid;
  grid-template-columns: 32px 1fr auto;
  align-content: start;
  height: 120px;
  margin: 0 18px 0 17px;
  padding: 20px 18px 0 22px;
  border: 2px solid #356c8b;
  border-radius: 8px;
}

.notes article svg {
  width: 18px;
  height: 18px;
  margin-top: 3px;
}

.notes h5 {
  color: #5cb8ee;
  font-size: 17px;
  line-height: 24px;
  font-weight: 600;
}

.notes time {
  font-size: 13px;
  line-height: 24px;
  font-weight: 500;
}

.notes p {
  grid-column: 2 / 4;
  padding: 5px 16px 0 0;
  font-size: 17px;
  line-height: 24px;
}

.profile {
  top: 567px;
  right: 170px;
  width: 548px;
  padding-bottom: 5px;
}

.profile header {
  display: flex;
  justify-content: flex-end;
  gap: 13px;
  height: 79px;
  padding: 4px 3px 0;
}

.profile .wifi {
  align-self: center;
  width: 28px;
  height: 24px;
  margin-right: 24px;
}

.profile .sq {
  width: 74px;
  border-radius: 12px;
}

.profile .sq svg {
  width: 26px;
  height: 26px;
}

.profile .deposit {
  width: 142px;
  border-radius: 12px;
  font-size: 24px;
  font-weight: 700;
}

.sheet {
  position: relative;
  height: 647px;
  margin: 0 5px 0 0;
  padding: 14px 0 0 51px;
}

.sheet::before {
  content: "";
  position: absolute;
  inset: 29px 0 0;
  border: 2px solid #252833;
  border-width: 2px 2px 0 0;
  border-radius: 0 10px 0 0;
}

.menu {
  position: relative;
  width: 341px;
  border: 2px solid #272a35;
  border-radius: 12px;
  background: #1c1f2a;
}

.group {
  padding: 7px 0;
  border-bottom: 2px solid #272a35;
}

.group:first-child {
  padding-top: 0;
}

.group:last-child {
  padding-bottom: 0;
  border: none;
}

.group p {
  height: 67px;
  padding: 0 21px;
  font-size: 18px;
  line-height: 67px;
  font-weight: 600;
}

.group button,
.switch {
  display: flex;
  justify-content: flex-start;
  align-items: center;
  gap: 15px;
  width: 100%;
  height: 73px;
  padding: 0 28px 0 22px;
  font-size: 21px;
  font-weight: 600;
}

.group svg {
  width: 28px;
  height: 26px;
}

.group span {
  margin-left: auto;
  font-size: 17px;
}

.group .flag {
  width: 27px;
  height: 27px;
  margin-left: -4px;
}

.group .out {
  color: #e86b72;
}

.switch {
  position: relative;
}

.switch input {
  appearance: none;
  width: 58px;
  height: 28px;
  margin: 0;
  border-radius: 14px;
  background: #2c2f3b;
}

.switch svg {
  position: absolute;
  left: 54px;
  width: 26px;
  height: 26px;
  padding: 4px;
  border-radius: 13px;
  background: #191c26;
}

.scroll {
  position: absolute;
  top: 163px;
  right: 4px;
  width: 8px;
  height: 280px;
  border-radius: 2px;
  background: #555863;
}
```

FILE: chart.js
```javascript
// direction, high, body top, body bottom, low - one entry per minute from 11:56
const candles = [
  ['u',534,543,550,550],['d',541,541,565,566],['u',557,562,565,579],['u',545,545,562,562],
  ['u',519,519,545,545],['u',509,516,521,521],['d',514,515,516,517],['u',503,503,517,517],
  ['d',503,503,516,516],['u',500,506,520,520],['d',506,506,519,521],['d',518,520,522,526],
  ['u',506,517,523,523],['u',487,491,517,519],['u',472,472,489,497],['d',453,472,480,480],
  ['d',469,480,497,499],['u',492,492,497,505],['d',492,492,503,505],['d',494,503,510,510],
  ['u',496,500,511,513],['d',495,500,524,525],['u',512,517,523,527],['u',511,511,515,519],
  ['d',501,511,514,517],['u',481,489,513,513],['u',480,485,489,493],['d',477,483,486,491],
  ['d',486,486,510,510],['u',483,483,509,509],['u',478,480,483,493],['u',477,477,480,482],
  ['u',466,473,477,477],['d',470,473,491,505],['u',310,402,505,505],['d',384,402,449,452],
  ['d',418,449,463,465],['d',412,463,494,497],['u',484,489,495,537],['d',473,489,494,505],
  ['u',443,446,491,491],['d',446,446,463,477],['d',455,463,472,482],['u',430,438,472,472],
  ['u',398,398,438,465],['u',361,364,395,398],['d',348,364,385,392],['u',364,367,385,398],
  ['u',298,301,364,367],['d',293,298,344,367],['d',320,344,352,364],['u',332,332,352,360],
  ['u',313,315,332,360],['u',305,308,317,334],['d',307,309,378,385],['d',365,375,386,397],
  ['d',376,386,411,429],['u',386,406,411,414],['u',368,372,406,429],['u',336,352,372,372],
  ['u',314,325,352,357],['d',314,325,330,340],['d',329,330,332,349],['u',298,301,335,340],
  ['d',290,301,309,335],['u',254,264,313,315],['u',250,262,264,287],['d',255,262,287,289],
  ['u',284,300,301,304],['d',273,287,303,303],['u',264,273,303,312],['u',245,247,273,289],
  ['u',159,172,247,252],['d',152,172,202,202],['d',191,202,205,229],['d',193,205,216,227],
  ['d',214,216,259,269],['u',244,244,259,266],['u',225,234,244,244],['d',234,234,287,292],
  ['d',259,284,290,312],['u',247,256,290,299],['u',237,242,256,260],['d',227,242,256,263],
  ['u',223,227,258,263],['u',200,225,227,235],['u',192,194,225,225],['u',163,176,195,198],
  ['u',162,171,176,178],['u',125,158,171,171],['d',157,157,173,185],['u',144,152,176,176],
  ['u',123,152,153,163],['d',152,152,187,192],['u',148,165,187,215],['u',139,165,168,171],
  ['u',138,138,162,176],['d',128,138,148,157],['d',139,148,165,176],['d',142,165,168,176]
];

const step = 12.5;
const firstLabel = 56;
const times = ['12:00', '12:15', '12:30', '12:45', '13:00', '13:15', '13:30', '12:45'];
let out = '';

for (let y = 49; y < 680; y += 66) {
  out += `<line class="grid-line" x1="0" x2="100%" y1="${y}" y2="${y}"/>`;
}

times.forEach((label, i) => {
  const x = firstLabel + i * step * 15;
  out += `<line class="grid-line" x1="${x}" x2="${x}" y1="0" y2="704"/>`;
  out += `<text class="axis-text" x="${x + 2}" y="718" text-anchor="middle">${label}</text>`;
});

out += '<line class="last-price" x1="0" x2="100%" y1="272" y2="272"/>';
out += '<line class="order-line" x1="117" x2="100%" y1="524" y2="524"/>';

candles.forEach(([dir, high, top, bottom, low], i) => {
  const x = firstLabel + (i - 4) * step;
  const cls = dir === 'u' ? 'candle-up' : 'candle-down';
  out += `<rect class="${cls} wick" x="${x - 1}" y="${high - 1}" width="2" height="${low - high}"/>`;
  out += `<rect class="${cls}" x="${x - 4}" y="${top - 1}" width="9" height="${Math.max(bottom - top, 1)}"/>`;
});

// open order marker
out += '<rect class="order-box" x="1" y="514" width="112" height="19"/>';
out += '<text class="order-text" x="6" y="528">BUY</text>';
out += '<text class="order-text" x="39" y="528">0.01</text>';
out += '<rect class="order-text" x="70" y="514" width="2" height="19"/>';
out += '<text class="order-text" x="77" y="528">-3.78</text>';
out += '<text class="axis-text" x="1859" y="321" text-anchor="end">1.11300</text>';

document.getElementById('candles').innerHTML = out;
```
